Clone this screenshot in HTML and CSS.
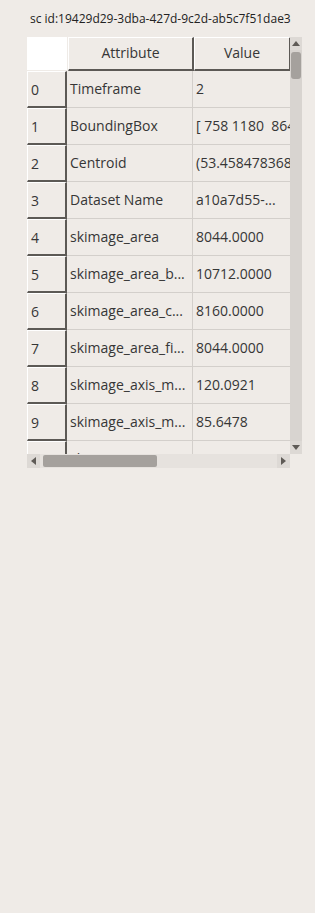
FILE: index.html
```html
<!DOCTYPE html>
<html lang="en">
<head>
    <meta charset="UTF-8">
    <title>Properties</title>
    <link rel="stylesheet" href="styles.css">
</head>
<body>
    <div class="title">sc id:19429d29-3dba-427d-9c2d-ab5c7f51dae3</div>

    <div class="table">
        <div class="view">
            <div class="row head">
                <div class="corner"></div>
                <div class="hcell attr">Attribute</div>
                <div class="hcell val">Value</div>
            </div>
            <div class="row"><div class="idx">0</div><div class="cell attr">Timeframe</div><div class="cell val">2</div></div>
            <div class="row"><div class="idx">1</div><div class="cell attr">BoundingBox</div><div class="cell val">[ 758 1180  864 1282]</div></div>
            <div class="row"><div class="idx">2</div><div class="cell attr">Centroid</div><div class="cell val">(53.45847836815, 51.2]</div></div>
            <div class="row"><div class="idx">3</div><div class="cell attr">Dataset Name</div><div class="cell val">a10a7d55-...</div></div>
            <div class="row"><div class="idx">4</div><div class="cell attr">skimage_area</div><div class="cell val">8044.0000</div></div>
            <div class="row"><div class="idx">5</div><div class="cell attr">skimage_area_b...</div><div class="cell val">10712.0000</div></div>
            <div class="row"><div class="idx">6</div><div class="cell attr">skimage_area_c...</div><div class="cell val">8160.0000</div></div>
            <div class="row"><div class="idx">7</div><div class="cell attr">skimage_area_fi...</div><div class="cell val">8044.0000</div></div>
            <div class="row"><div class="idx">8</div><div class="cell attr">skimage_axis_m...</div><div class="cell val">120.0921</div></div>
            <div class="row"><div class="idx">9</div><div class="cell attr">skimage_axis_m...</div><div class="cell val">85.6478</div></div>
            <div class="row"><div class="idx">10</div><div class="cell attr">skimage_...</div><div class="cell val">53.4587</div></div>
        </div>

        <div class="vscroll">
            <div class="sbtn"><svg width="8" height="5" viewBox="0 0 8 5"><path d="M0 5 L4 0 L8 5 Z" fill="#5f5b57"/></svg></div>
            <div class="vtrack"><div class="vhandle"></div></div>
            <div class="sbtn"><svg width="8" height="5" viewBox="0 0 8 5"><path d="M0 0 L8 0 L4 5 Z" fill="#5f5b57"/></svg></div>
        </div>

        <div class="hscroll">
            <div class="sbtn"><svg width="5" height="8" viewBox="0 0 5 8"><path d="M5 0 L5 8 L0 4 Z" fill="#5f5b57"/></svg></div>
            <div class="htrack"><div class="hhandle"></div></div>
            <div class="sbtn"><svg width="5" height="8" viewBox="0 0 5 8"><path d="M0 0 L0 8 L5 4 Z" fill="#5f5b57"/></svg></div>
        </div>
        <div class="filler"></div>
    </div>
</body>
</html>
```

FILE: styles.css
```css
body {
    margin: 0;
    background-color: #efebe7;
    font-family: 'Open Sans', 'Noto Sans', sans-serif;
    color: #363636;
}
.title {
    padding: 11px 0 0 30px;
    height: 26px;
    font-size: 12px;
    line-height: 16px;
    color: #222;
    white-space: nowrap;
}
.table {
    margin-left: 27px;
    width: 275px;
    display: grid;
    grid-template-columns: 263px 12px;
    grid-template-rows: 417px 14px;
}
.view {
    overflow: hidden;
}
.row {
    display: flex;
    height: 37px;
}
.row.head {
    height: 34px;
}
.corner {
    flex: 0 0 40px;
    background-color: #fff;
    margin-bottom: 1px;
    border-right: 1px solid #efebe7;
}
.hcell {
    box-sizing: border-box;
    text-align: center;
    line-height: 30px;
    font-size: 14px;
    border-top: 1px solid #fff;
    border-left: 1px solid #fff;
    border-right: 2px solid #5c5955;
    border-bottom: 2px solid #5c5955;
    white-space: nowrap;
    overflow: hidden;
}
.idx {
    box-sizing: border-box;
    flex: 0 0 40px;
    padding-left: 3px;
    font-size: 14px;
    line-height: 36px;
    border-top: 1px solid #fff;
    border-left: 1px solid #fff;
    border-right: 2px solid #5c5955;
    border-bottom: 2px solid #5c5955;
}
.cell {
    box-sizing: border-box;
    padding-left: 3px;
    font-size: 14px;
    line-height: 36px;
    border-right: 1px solid #d3cfcb;
    border-bottom: 1px solid #d3cfcb;
    white-space: pre;
    overflow: hidden;
}
.attr {
    flex: 0 0 126px;
}
.val {
    flex: 0 0 160px;
}
.hcell.val {
    flex: 0 0 97px;
}
.vscroll {
    display: flex;
    flex-direction: column;
    background-color: #e6e2de;
}
.vtrack {
    flex: 1;
    padding: 2px 1px;
    background-color: #d8d4d0;
}
.vhandle {
    height: 27px;
    border-radius: 3px;
    background-color: #a5a19d;
}
.sbtn {
    display: flex;
    align-items: center;
    justify-content: center;
    flex: 0 0 13px;
    background-color: #ddd9d5;
}
.hscroll {
    display: flex;
    background-color: #e6e2de;
}
.htrack {
    flex: 1;
    padding: 1px 3px;
    background-color: #e6e2de;
}
.hhandle {
    width: 114px;
    height: 100%;
    border-radius: 2px;
    background-color: #a5a19d;
}
```
